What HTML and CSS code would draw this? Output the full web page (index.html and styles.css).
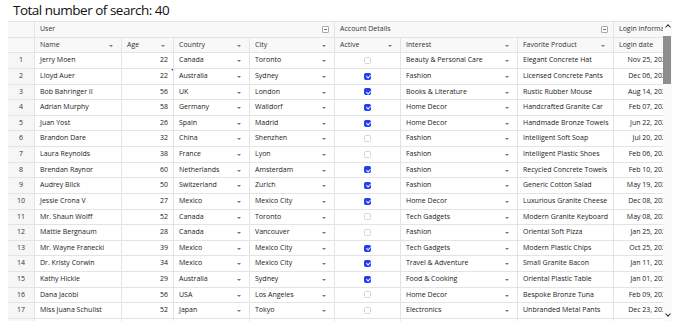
FILE: index.html
```html
<!DOCTYPE html>
<html lang="en">
<head>
  <meta charset="UTF-8">
  <title>Users grid</title>
  <link rel="stylesheet" href="styles.css">
</head>
<body>
  <h1 class="title">Total number of search: 40</h1>

  <div class="grid">
    <div class="grid-view">
      <!-- column groups -->
      <div class="row group-row">
        <div class="cell num"></div>
        <div class="cell group span-4">User <span class="collapse"></span></div>
        <div class="cell group span-3">Account Details <span class="collapse"></span></div>
        <div class="cell group">Login information</div>
      </div>

      <!-- column headers -->
      <div class="row head-row">
        <div class="cell num"></div>
        <div class="cell head">Name <span class="caret"></span></div>
        <div class="cell head">Age <span class="caret"></span></div>
        <div class="cell head">Country <span class="caret"></span></div>
        <div class="cell head">City <span class="caret"></span></div>
        <div class="cell head">Active <span class="caret"></span></div>
        <div class="cell head">Interest <span class="caret"></span></div>
        <div class="cell head">Favorite Product <span class="caret"></span></div>
        <div class="cell head">Login date</div>
      </div>

      <div class="row">
        <div class="cell num">1</div><div class="cell">Jerry Moen</div><div class="cell right">22</div>
        <div class="cell select">Canada <span class="caret"></span></div><div class="cell select">Toronto <span class="caret"></span></div>
        <div class="cell center"><span class="check"></span></div>
        <div class="cell select">Beauty &amp; Personal Care <span class="caret"></span></div><div class="cell">Elegant Concrete Hat</div><div class="cell right">Nov 25, 2023</div>
      </div>
      <div class="row">
        <div class="cell num">2</div><div class="cell">Lloyd Auer</div><div class="cell right flagged">22</div>
        <div class="cell select">Australia <span class="caret"></span></div><div class="cell select">Sydney <span class="caret"></span></div>
        <div class="cell center"><span class="check on"></span></div>
        <div class="cell select">Fashion <span class="caret"></span></div><div class="cell">Licensed Concrete Pants</div><div class="cell right">Dec 06, 2023</div>
      </div>
      <div class="row">
        <div class="cell num">3</div><div class="cell">Bob Bahringer II</div><div class="cell right">56</div>
        <div class="cell select">UK <span class="caret"></span></div><div class="cell select">London <span class="caret"></span></div>
        <div class="cell center"><span class="check on"></span></div>
        <div class="cell select">Books &amp; Literature <span class="caret"></span></div><div class="cell">Rustic Rubber Mouse</div><div class="cell right">Aug 14, 2023</div>
      </div>
      <div class="row">
        <div class="cell num">4</div><div class="cell">Adrian Murphy</div><div class="cell right">58</div>
        <div class="cell select">Germany <span class="caret"></span></div><div class="cell select">Walldorf <span class="caret"></span></div>
        <div class="cell center"><span class="check on"></span></div>
        <div class="cell select">Home Decor <span class="caret"></span></div><div class="cell">Handcrafted Granite Car</div><div class="cell right">Feb 07, 2023</div>
      </div>
      <div class="row">
        <div class="cell num">5</div><div class="cell">Juan Yost</div><div class="cell right">26</div>
        <div class="cell select">Spain <span class="caret"></span></div><div class="cell select">Madrid <span class="caret"></span></div>
        <div class="cell center"><span class="check on"></span></div>
        <div class="cell select">Home Decor <span class="caret"></span></div><div class="cell">Handmade Bronze Towels</div><div class="cell right">Jun 22, 2023</div>
      </div>
      <div class="row">
        <div class="cell num">6</div><div class="cell">Brandon Dare</div><div class="cell right">32</div>
        <div class="cell select">China <span class="caret"></span></div><div class="cell select">Shenzhen <span class="caret"></span></div>
        <div class="cell center"><span class="check"></span></div>
        <div class="cell select">Fashion <span class="caret"></span></div><div class="cell">Intelligent Soft Soap</div><div class="cell right">Jul 20, 2023</div>
      </div>
      <div class="row">
        <div class="cell num">7</div><div class="cell">Laura Reynolds</div><div class="cell right">38</div>
        <div class="cell select">France <span class="caret"></span></div><div class="cell select">Lyon <span class="caret"></span></div>
        <div class="cell center"><span class="check"></span></div>
        <div class="cell select">Fashion <span class="caret"></span></div><div class="cell">Intelligent Plastic Shoes</div><div class="cell right">Feb 06, 2023</div>
      </div>
      <div class="row">
        <div class="cell num">8</div><div class="cell">Brendan Raynor</div><div class="cell right">60</div>
        <div class="cell select">Netherlands <span class="caret"></span></div><div class="cell select">Amsterdam <span class="caret"></span></div>
        <div class="cell center"><span class="check on"></span></div>
        <div class="cell select">Fashion <span class="caret"></span></div><div class="cell">Recycled Concrete Towels</div><div class="cell right">Feb 10, 2023</div>
      </div>
      <div class="row">
        <div class="cell num">9</div><div class="cell">Audrey Blick</div><div class="cell right">50</div>
        <div class="cell select">Switzerland <span class="caret"></span></div><div class="cell select">Zurich <span class="caret"></span></div>
        <div class="cell center"><span class="check on"></span></div>
        <div class="cell select">Fashion <span class="caret"></span></div><div class="cell">Generic Cotton Salad</div><div class="cell right">May 19, 2023</div>
      </div>
      <div class="row">
        <div class="cell num">10</div><div class="cell">Jessie Crona V</div><div class="cell right">27</div>
        <div class="cell select">Mexico <span class="caret"></span></div><div class="cell select">Mexico City <span class="caret"></span></div>
        <div class="cell center"><span class="check on"></span></div>
        <div class="cell select">Home Decor <span class="caret"></span></div><div class="cell">Luxurious Granite Cheese</div><div class="cell right">Dec 08, 2023</div>
      </div>
      <div class="row">
        <div class="cell num">11</div><div class="cell">Mr. Shaun Wolff</div><div class="cell right">52</div>
        <div class="cell select">Canada <span class="caret"></span></div><div class="cell select">Toronto <span class="caret"></span></div>
        <div class="cell center"><span class="check"></span></div>
        <div class="cell select">Tech Gadgets <span class="caret"></span></div><div class="cell">Modern Granite Keyboard</div><div class="cell right">May 08, 2023</div>
      </div>
      <div class="row">
        <div class="cell num">12</div><div class="cell">Mattie Bergnaum</div><div class="cell right">28</div>
        <div class="cell select">Canada <span class="caret"></span></div><div class="cell select">Vancouver <span class="caret"></span></div>
        <div class="cell center"><span class="check"></span></div>
        <div class="cell select">Fashion <span class="caret"></span></div><div class="cell">Oriental Soft Pizza</div><div class="cell right">Jan 25, 2023</div>
      </div>
      <div class="row">
        <div class="cell num">13</div><div class="cell">Mr. Wayne Franecki</div><div class="cell right">39</div>
        <div class="cell select">Mexico <span class="caret"></span></div><div class="cell select">Mexico City <span class="caret"></span></div>
        <div class="cell center"><span class="check on"></span></div>
        <div class="cell select">Tech Gadgets <span class="caret"></span></div><div class="cell">Modern Plastic Chips</div><div class="cell right">Oct 25, 2023</div>
      </div>
      <div class="row">
        <div class="cell num">14</div><div class="cell">Dr. Kristy Corwin</div><div class="cell right">34</div>
        <div class="cell select">Mexico <span class="caret"></span></div><div class="cell select">Mexico City <span class="caret"></span></div>
        <div class="cell center"><span class="check on"></span></div>
        <div class="cell select">Travel &amp; Adventure <span class="caret"></span></div><div class="cell">Small Granite Bacon</div><div class="cell right">Jan 11, 2023</div>
      </div>
      <div class="row">
        <div class="cell num">15</div><div class="cell">Kathy Hickle</div><div class="cell right">29</div>
        <div class="cell select">Australia <span class="caret"></span></div><div class="cell select">Sydney <span class="caret"></span></div>
        <div class="cell center"><span class="check on"></span></div>
        <div class="cell select">Food &amp; Cooking <span class="caret"></span></div><div class="cell">Oriental Plastic Table</div><div class="cell right">Jan 01, 2023</div>
      </div>
      <div class="row">
        <div class="cell num">16</div><div class="cell">Dana Jacobi</div><div class="cell right">56</div>
        <div class="cell select">USA <span class="caret"></span></div><div class="cell select">Los Angeles <span class="caret"></span></div>
        <div class="cell center"><span class="check"></span></div>
        <div class="cell select">Home Decor <span class="caret"></span></div><div class="cell">Bespoke Bronze Tuna</div><div class="cell right">Feb 09, 2023</div>
      </div>
      <div class="row">
        <div class="cell num">17</div><div class="cell">Miss Juana Schulist</div><div class="cell right">52</div>
        <div class="cell select">Japan <span class="caret"></span></div><div class="cell select">Tokyo <span class="caret"></span></div>
        <div class="cell center"><span class="check"></span></div>
        <div class="cell select">Electronics <span class="caret"></span></div><div class="cell">Unbranded Metal Pants</div><div class="cell right">Dec 23, 2023</div>
      </div>
      <div class="row">
        <div class="cell num">18</div><div class="cell">Ella Kunze</div><div class="cell right">44</div>
        <div class="cell select">USA <span class="caret"></span></div><div class="cell select">New York <span class="caret"></span></div>
        <div class="cell center"><span class="check on"></span></div>
        <div class="cell select">Fashion <span class="caret"></span></div><div class="cell">Sleek Wooden Gloves</div><div class="cell right">Mar 14, 2023</div>
      </div>
    </div>

    <div class="vscroll">
      <span class="arrow up"></span>
      <div class="track"><span class="thumb"></span></div>
      <span class="arrow down"></span>
    </div>
  </div>
</body>
</html>
```

FILE: styles.css
```css
* {
  box-sizing: border-box;
}

html, body {
  overflow: hidden;
}

body {
  margin: 0 8px;
  background: white;
  color: #1a1a1a;
  font-family: 'Open Sans', 'Noto Sans', sans-serif;
}

.title {
  font-family: 'Open Sans', sans-serif;
  font-size: 13.5px;
  font-weight: 400;
  letter-spacing: -0.5px;
  line-height: 20px;
  margin: 0;
  padding-left: 5px;
  color: #111;
}

.grid {
  display: flex;
  width: 664px;
  height: 300px;
  margin-top: 1px;
  border-top: 1px solid #e4e4e4;
  overflow: hidden;
}

.grid-view {
  flex: 1;
  overflow: hidden;
}

.row {
  display: grid;
  grid-template-columns: 27px 87px 52px 76px 85px 66px 117px 96px 62px;
  width: max-content;
  height: 15.625px;
  font-size: 7px;
  line-height: 14.6px;
}

.cell {
  position: relative;
  padding: 0 5px;
  border-right: 1px solid #e4e4e4;
  border-bottom: 1px solid #e4e4e4;
  white-space: nowrap;
  overflow: hidden;
}

.num {
  background: #f6f6f6;
  text-align: center;
  padding: 0;
  color: #333;
}

.group-row .cell,
.head-row .cell {
  background: #f8f8f8;
  color: #333;
}

.span-4 {
  grid-column: span 4;
}

.span-3 {
  grid-column: span 3;
}

.right {
  text-align: right;
}

.center {
  display: flex;
  align-items: center;
  justify-content: center;
}

/* small dropdown / sort marker on the right of a cell */
.caret {
  position: absolute;
  right: 8px;
  top: 7px;
  border-left: 2px solid transparent;
  border-right: 2px solid transparent;
  border-top: 2px solid #777;
}

/* group collapse toggle */
.collapse {
  position: absolute;
  right: 5px;
  top: 4px;
  width: 7px;
  height: 7px;
  border: 1px solid #aaa;
  border-radius: 1px;
  background: white;
}

.collapse::after {
  content: '';
  position: absolute;
  left: 1px;
  right: 1px;
  top: 2px;
  border-top: 1px solid #777;
}

.check {
  width: 7px;
  height: 7px;
  border: 1px solid #d6d6d6;
  border-radius: 1.5px;
  background: white;
}

.check.on {
  background: #1f3ff0;
  border-color: #1f3ff0;
  position: relative;
}

.check.on::after {
  content: '';
  position: absolute;
  left: 1.6px;
  top: 0.3px;
  width: 1.6px;
  height: 3px;
  border-right: 1px solid white;
  border-bottom: 1px solid white;
  transform: rotate(45deg);
}

/* edit marker in the corner of a cell */
.flagged::before {
  content: '';
  position: absolute;
  right: 0;
  top: -1px;
  border-top: 3px solid #2246e8;
  border-left: 3px solid transparent;
}

.vscroll {
  width: 9px;
  display: flex;
  flex-direction: column;
  align-items: center;
  background: #fafafa;
}

.track {
  flex: 1;
  width: 100%;
  padding-top: 4px;
}

.thumb {
  display: block;
  width: 8px;
  height: 48px;
  background: #8d8d8d;
}

.arrow {
  width: 4px;
  height: 4px;
  border-left: 1px solid #333;
  border-top: 1px solid #333;
  margin: 3px 0;
}

.arrow.up {
  transform: rotate(45deg);
  margin-top: 3px;
}

.arrow.down {
  transform: rotate(225deg);
  margin-bottom: 5px;
}
```
